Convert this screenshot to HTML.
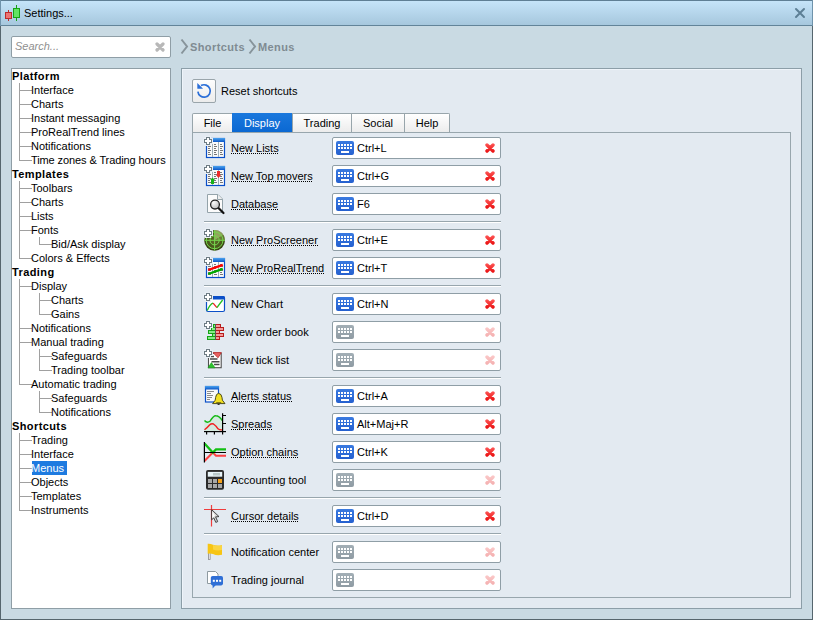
<!DOCTYPE html><html><head><meta charset="utf-8"><style>
*{box-sizing:border-box;margin:0;padding:0}
html,body{width:813px;height:620px;overflow:hidden}
body{position:relative;background:#c9dae3;font-family:"Liberation Sans",sans-serif;font-size:11px;color:#000}
.ab{position:absolute}
.t{position:absolute;white-space:nowrap;line-height:14px;height:14px}
.b{font-weight:bold;letter-spacing:0.4px}
.hl{position:absolute;background:#a0a0a0}
.lbl{position:absolute;white-space:nowrap;line-height:14px}
.u{background-image:linear-gradient(to right,#000 50%,transparent 50%);background-size:2px 1px;background-repeat:repeat-x;background-position:0 12px}
.fld{position:absolute;left:332px;width:169px;height:22px;background:#fff;border:1px solid #8f9ea6;border-radius:2px}
.kb{position:absolute;left:3px;top:3px;width:18px;height:14px}
.ft{position:absolute;left:24px;top:3px;line-height:14px;white-space:nowrap}
.x{position:absolute;left:152px;top:5px;width:10px;height:10px}
.sep{position:absolute;left:204px;width:297px;height:1px;background:#98a6ad;box-shadow:0 1px 0 #fff}
.tab{position:absolute;top:113px;height:19px;border:1px solid #98a5ab;border-bottom:none;background:linear-gradient(#fff,#ececec);text-align:center;line-height:14px;padding-top:2px}
</style></head><body>
<div class="ab" style="left:0;top:0;width:813px;height:620px;border:1px solid #56666e"></div>
<div class="ab" style="left:1px;top:1px;width:811px;height:24px;background:linear-gradient(#c5e4f9,#a6c7dd)"></div>
<div class="ab" style="left:0;top:0;width:813px;height:1px;background:#5f7f95"></div>
<div class="ab" style="left:0;top:25px;width:813px;height:1px;background:#628499"></div>
<div class="ab" style="left:812px;top:0;width:1px;height:26px;background:#6f93ab"></div>
<div class="ab" style="left:0;top:0;width:1px;height:26px;background:#6f93ab"></div>
<svg class="ab" style="left:0;top:0" width="24" height="24" shape-rendering="crispEdges">
<rect x="8" y="10" width="1" height="11" fill="#bd2b2b"/>
<rect x="5.5" y="12.5" width="6" height="6" fill="#ec7474" stroke="#bd2b2b" stroke-width="1"/>
<rect x="16" y="5" width="1" height="16" fill="#17a317"/>
<rect x="13.5" y="8.5" width="6" height="9" fill="#62e462" stroke="#17a317" stroke-width="1"/>
</svg>
<div class="t" style="left:24px;top:6px">Settings...</div>
<svg class="ab" style="left:792px;top:5px" width="16" height="16"><path d="M4 4 L12 12 M12 4 L4 12" stroke="#5d7f95" stroke-width="2" stroke-linecap="round"/></svg>
<div class="ab" style="left:11px;top:36px;width:160px;height:22px;background:#fff;border:1px solid #8f9ea6;border-radius:2px"></div>
<div class="t" style="left:15px;top:39px;font-style:italic;color:#8f8f8f">Search...</div>
<svg class="ab" style="left:155px;top:42px" width="10" height="10"><path d="M2 2 L8 8 M8 2 L2 8" stroke="#b8b8b8" stroke-width="3.2" stroke-linecap="round"/></svg>
<div class="ab" style="left:11px;top:68px;width:160px;height:541px;background:#fff;border:1px solid #8f9ea6"></div>
<div class="t b" style="left:12px;top:69px">Platform</div>
<div class="hl" style="left:20px;top:90px;width:12px;height:1px"></div>
<div class="t" style="left:31px;top:83px;">Interface</div>
<div class="hl" style="left:20px;top:104px;width:12px;height:1px"></div>
<div class="t" style="left:31px;top:97px;">Charts</div>
<div class="hl" style="left:20px;top:118px;width:12px;height:1px"></div>
<div class="t" style="left:31px;top:111px;">Instant messaging</div>
<div class="hl" style="left:20px;top:132px;width:12px;height:1px"></div>
<div class="t" style="left:31px;top:125px;">ProRealTrend lines</div>
<div class="hl" style="left:20px;top:146px;width:12px;height:1px"></div>
<div class="t" style="left:31px;top:139px;">Notifications</div>
<div class="hl" style="left:20px;top:160px;width:12px;height:1px"></div>
<div class="t" style="left:31px;top:153px;letter-spacing:-0.1px;">Time zones &amp; Trading hours</div>
<div class="t b" style="left:12px;top:167px">Templates</div>
<div class="hl" style="left:20px;top:188px;width:12px;height:1px"></div>
<div class="t" style="left:31px;top:181px;">Toolbars</div>
<div class="hl" style="left:20px;top:202px;width:12px;height:1px"></div>
<div class="t" style="left:31px;top:195px;">Charts</div>
<div class="hl" style="left:20px;top:216px;width:12px;height:1px"></div>
<div class="t" style="left:31px;top:209px;">Lists</div>
<div class="hl" style="left:20px;top:230px;width:12px;height:1px"></div>
<div class="t" style="left:31px;top:223px;">Fonts</div>
<div class="hl" style="left:40px;top:244px;width:12px;height:1px"></div>
<div class="t" style="left:51px;top:237px;">Bid/Ask display</div>
<div class="hl" style="left:20px;top:258px;width:12px;height:1px"></div>
<div class="t" style="left:31px;top:251px;">Colors &amp; Effects</div>
<div class="t b" style="left:12px;top:265px">Trading</div>
<div class="hl" style="left:20px;top:286px;width:12px;height:1px"></div>
<div class="t" style="left:31px;top:279px;">Display</div>
<div class="hl" style="left:40px;top:300px;width:12px;height:1px"></div>
<div class="t" style="left:51px;top:293px;">Charts</div>
<div class="hl" style="left:40px;top:314px;width:12px;height:1px"></div>
<div class="t" style="left:51px;top:307px;">Gains</div>
<div class="hl" style="left:20px;top:328px;width:12px;height:1px"></div>
<div class="t" style="left:31px;top:321px;">Notifications</div>
<div class="hl" style="left:20px;top:342px;width:12px;height:1px"></div>
<div class="t" style="left:31px;top:335px;">Manual trading</div>
<div class="hl" style="left:40px;top:356px;width:12px;height:1px"></div>
<div class="t" style="left:51px;top:349px;">Safeguards</div>
<div class="hl" style="left:40px;top:370px;width:12px;height:1px"></div>
<div class="t" style="left:51px;top:363px;">Trading toolbar</div>
<div class="hl" style="left:20px;top:384px;width:12px;height:1px"></div>
<div class="t" style="left:31px;top:377px;">Automatic trading</div>
<div class="hl" style="left:40px;top:398px;width:12px;height:1px"></div>
<div class="t" style="left:51px;top:391px;">Safeguards</div>
<div class="hl" style="left:40px;top:412px;width:12px;height:1px"></div>
<div class="t" style="left:51px;top:405px;">Notifications</div>
<div class="t b" style="left:12px;top:419px">Shortcuts</div>
<div class="hl" style="left:20px;top:440px;width:12px;height:1px"></div>
<div class="t" style="left:31px;top:433px;">Trading</div>
<div class="hl" style="left:20px;top:454px;width:12px;height:1px"></div>
<div class="t" style="left:31px;top:447px;">Interface</div>
<div class="hl" style="left:20px;top:468px;width:12px;height:1px"></div>
<div class="ab" style="left:32px;top:461px;width:35px;height:14px;background:#1e7be0"></div>
<div class="t" style="left:31px;top:461px;color:#fff">Menus</div>
<div class="hl" style="left:20px;top:482px;width:12px;height:1px"></div>
<div class="t" style="left:31px;top:475px;">Objects</div>
<div class="hl" style="left:20px;top:496px;width:12px;height:1px"></div>
<div class="t" style="left:31px;top:489px;">Templates</div>
<div class="hl" style="left:20px;top:510px;width:12px;height:1px"></div>
<div class="t" style="left:31px;top:503px;">Instruments</div>
<div class="hl" style="left:19px;top:83px;width:1px;height:78px"></div>
<div class="hl" style="left:19px;top:181px;width:1px;height:78px"></div>
<div class="hl" style="left:39px;top:237px;width:1px;height:8px"></div>
<div class="hl" style="left:19px;top:279px;width:1px;height:106px"></div>
<div class="hl" style="left:39px;top:293px;width:1px;height:22px"></div>
<div class="hl" style="left:39px;top:349px;width:1px;height:22px"></div>
<div class="hl" style="left:39px;top:391px;width:1px;height:22px"></div>
<div class="hl" style="left:19px;top:433px;width:1px;height:78px"></div>
<svg class="ab" style="left:180px;top:38px" width="10" height="18"><path d="M1.5 1.5 L7 8.5 L1.5 15.5" fill="none" stroke="#87949b" stroke-width="2"/></svg>
<div class="t b" style="left:190px;top:40px;color:#7f8b92">Shortcuts</div>
<svg class="ab" style="left:248px;top:38px" width="10" height="18"><path d="M1.5 1.5 L7 8.5 L1.5 15.5" fill="none" stroke="#87949b" stroke-width="2"/></svg>
<div class="t b" style="left:258px;top:40px;color:#7f8b92">Menus</div>
<div class="ab" style="left:181px;top:68px;width:621px;height:541px;background:#e3eaf1;border:1px solid #8c9ea8;box-shadow:inset 1px 1px 0 #eef4fa"></div>
<div class="ab" style="left:192px;top:79px;width:24px;height:24px;border:1px solid #9aa5ab;border-radius:2px;background:linear-gradient(#fdfdfd,#ececec)"></div>
<svg class="ab" style="left:192px;top:79px" width="24" height="24">
<path d="M5.9 12.6 A6.2 6.2 0 1 0 9.0 6.6" fill="none" stroke="#2b6fd8" stroke-width="1.7"/>
<path d="M5.3 4 L5.3 9.8 L11.1 9.8 Z" fill="#2b6fd8"/>
</svg>
<div class="t" style="left:221px;top:84px">Reset shortcuts</div>
<div class="ab" style="left:192px;top:132px;width:599px;height:466px;border:1px solid #98a6ad;background:#e3eaf1"></div>
<div class="tab" style="left:192px;width:41px;border-top-left-radius:2px;">File</div>
<div class="tab" style="left:292px;width:60px;">Trading</div>
<div class="tab" style="left:351px;width:54px;">Social</div>
<div class="tab" style="left:404px;width:46px;border-top-right-radius:2px;">Help</div>
<div class="tab" style="left:232px;width:60px;border:none;background:linear-gradient(#1a78dd,#0b68d2);color:#fff;height:19px;padding-top:3px">Display</div>
<div class="ab" style="left:204px;top:137px;width:22px;height:22px"><svg width="22" height="22" viewBox="0 0 22 22" style="position:absolute;left:0;top:0;overflow:visible"><defs><linearGradient id="hdr" x1="0" y1="0" x2="0" y2="1"><stop offset="0" stop-color="#4aa3ee"/><stop offset="1" stop-color="#0b56c9"/></linearGradient></defs><rect x="2.5" y="1.5" width="18" height="19" fill="#fafafa" stroke="#0a4fc9" stroke-width="1.2"/><rect x="2" y="1" width="19" height="4" fill="url(#hdr)"/><rect x="8" y="5" width="1" height="15" fill="#9fb0b8"/><rect x="14" y="5" width="1" height="15" fill="#9fb0b8"/><rect x="4" y="7" width="2" height="1" fill="#777"/><rect x="4" y="9" width="3" height="1" fill="#777"/><rect x="4" y="11" width="2" height="1" fill="#777"/><rect x="4" y="13" width="3" height="1" fill="#777"/><rect x="4" y="15" width="2" height="1" fill="#777"/><rect x="4" y="17" width="3" height="1" fill="#777"/><rect x="10" y="7" width="2" height="1" fill="#777"/><rect x="10" y="9" width="3" height="1" fill="#777"/><rect x="10" y="11" width="2" height="1" fill="#777"/><rect x="10" y="13" width="3" height="1" fill="#777"/><rect x="10" y="15" width="2" height="1" fill="#777"/><rect x="10" y="17" width="3" height="1" fill="#777"/><rect x="16" y="7" width="2" height="1" fill="#777"/><rect x="16" y="9" width="3" height="1" fill="#777"/><rect x="16" y="11" width="2" height="1" fill="#777"/><rect x="16" y="13" width="3" height="1" fill="#777"/><rect x="16" y="15" width="2" height="1" fill="#777"/><rect x="16" y="17" width="3" height="1" fill="#777"/><g shape-rendering="crispEdges"><path d="M1 -1 H7 V1 H9 V7 H7 V9 H1 V7 H-1 V1 H1 Z" fill="#e9eff5"/><path d="M2 0 H6 V2 H8 V6 H6 V8 H2 V6 H0 V2 H2 Z" fill="#6e7c84"/><path d="M3 1 H5 V3 H7 V5 H5 V7 H3 V5 H1 V3 H3 Z" fill="#fff"/></g></svg></div>
<div class="lbl u" style="left:231px;top:141px">New Lists</div>
<div class="fld" style="top:137px"><svg class="kb" width="18" height="14" shape-rendering="crispEdges"><defs><linearGradient id="g1" x1="0" y1="0" x2="0" y2="1"><stop offset="0" stop-color="#3a7ae0"/><stop offset="1" stop-color="#2560cf"/></linearGradient></defs><rect x="0" y="0" width="18" height="14" rx="2" fill="url(#g1)" shape-rendering="auto"/><rect x="2" y="3" width="2" height="2" fill="#fff"/><rect x="2" y="6" width="2" height="2" fill="#fff"/><rect x="5" y="3" width="2" height="2" fill="#fff"/><rect x="5" y="6" width="2" height="2" fill="#fff"/><rect x="8" y="3" width="2" height="2" fill="#fff"/><rect x="8" y="6" width="2" height="2" fill="#fff"/><rect x="11" y="3" width="2" height="2" fill="#fff"/><rect x="11" y="6" width="2" height="2" fill="#fff"/><rect x="14" y="3" width="2" height="2" fill="#fff"/><rect x="14" y="6" width="2" height="2" fill="#fff"/><rect x="5" y="10" width="8" height="2" fill="#fff"/></svg><div class="ft">Ctrl+L</div><svg class="x" width="10" height="10"><defs><linearGradient id="xg1" gradientUnits="userSpaceOnUse" x1="0" y1="0" x2="0" y2="10"><stop offset="0" stop-color="#ff5a5a"/><stop offset="1" stop-color="#e80a0a"/></linearGradient></defs><path d="M2 2 L8 8 M8 2 L2 8" stroke="url(#xg1)" stroke-width="3.4" stroke-linecap="round"/></svg></div>
<div class="ab" style="left:204px;top:165px;width:22px;height:22px"><svg width="22" height="22" viewBox="0 0 22 22" style="position:absolute;left:0;top:0;overflow:visible"><defs><linearGradient id="hdr" x1="0" y1="0" x2="0" y2="1"><stop offset="0" stop-color="#4aa3ee"/><stop offset="1" stop-color="#0b56c9"/></linearGradient></defs><rect x="2.5" y="1.5" width="18" height="19" fill="#fafafa" stroke="#0a4fc9" stroke-width="1.2"/><rect x="2" y="1" width="19" height="4" fill="url(#hdr)"/><rect x="8" y="5" width="1" height="15" fill="#9fb0b8"/><rect x="14" y="5" width="1" height="15" fill="#9fb0b8"/><rect x="4" y="7" width="2" height="1" fill="#777"/><rect x="4" y="9" width="3" height="1" fill="#777"/><rect x="4" y="11" width="2" height="1" fill="#777"/><rect x="4" y="13" width="3" height="1" fill="#777"/><rect x="4" y="15" width="2" height="1" fill="#777"/><rect x="4" y="17" width="3" height="1" fill="#777"/><rect x="10" y="7" width="2" height="1" fill="#777"/><rect x="10" y="9" width="3" height="1" fill="#777"/><rect x="10" y="11" width="2" height="1" fill="#777"/><rect x="10" y="13" width="3" height="1" fill="#777"/><rect x="10" y="15" width="2" height="1" fill="#777"/><rect x="10" y="17" width="3" height="1" fill="#777"/><rect x="16" y="7" width="2" height="1" fill="#777"/><rect x="16" y="9" width="3" height="1" fill="#777"/><rect x="16" y="11" width="2" height="1" fill="#777"/><rect x="16" y="13" width="3" height="1" fill="#777"/><rect x="16" y="15" width="2" height="1" fill="#777"/><rect x="16" y="17" width="3" height="1" fill="#777"/><path d="M8.5 12.5 L11 15 L10 15 L10 19 L7 19 L7 15 L6 15 Z" fill="#19b219"/><path d="M14.5 13 L17 10 L16 10 L16 6 L13 6 L13 10 L12 10 Z" fill="#ee2a2a"/><g shape-rendering="crispEdges"><path d="M1 -1 H7 V1 H9 V7 H7 V9 H1 V7 H-1 V1 H1 Z" fill="#e9eff5"/><path d="M2 0 H6 V2 H8 V6 H6 V8 H2 V6 H0 V2 H2 Z" fill="#6e7c84"/><path d="M3 1 H5 V3 H7 V5 H5 V7 H3 V5 H1 V3 H3 Z" fill="#fff"/></g></svg></div>
<div class="lbl u" style="left:231px;top:169px">New Top movers</div>
<div class="fld" style="top:165px"><svg class="kb" width="18" height="14" shape-rendering="crispEdges"><defs><linearGradient id="g1" x1="0" y1="0" x2="0" y2="1"><stop offset="0" stop-color="#3a7ae0"/><stop offset="1" stop-color="#2560cf"/></linearGradient></defs><rect x="0" y="0" width="18" height="14" rx="2" fill="url(#g1)" shape-rendering="auto"/><rect x="2" y="3" width="2" height="2" fill="#fff"/><rect x="2" y="6" width="2" height="2" fill="#fff"/><rect x="5" y="3" width="2" height="2" fill="#fff"/><rect x="5" y="6" width="2" height="2" fill="#fff"/><rect x="8" y="3" width="2" height="2" fill="#fff"/><rect x="8" y="6" width="2" height="2" fill="#fff"/><rect x="11" y="3" width="2" height="2" fill="#fff"/><rect x="11" y="6" width="2" height="2" fill="#fff"/><rect x="14" y="3" width="2" height="2" fill="#fff"/><rect x="14" y="6" width="2" height="2" fill="#fff"/><rect x="5" y="10" width="8" height="2" fill="#fff"/></svg><div class="ft">Ctrl+G</div><svg class="x" width="10" height="10"><defs><linearGradient id="xg1" gradientUnits="userSpaceOnUse" x1="0" y1="0" x2="0" y2="10"><stop offset="0" stop-color="#ff5a5a"/><stop offset="1" stop-color="#e80a0a"/></linearGradient></defs><path d="M2 2 L8 8 M8 2 L2 8" stroke="url(#xg1)" stroke-width="3.4" stroke-linecap="round"/></svg></div>
<div class="ab" style="left:204px;top:193px;width:22px;height:22px"><svg width="22" height="22" viewBox="0 0 22 22" style="position:absolute;left:0;top:0;overflow:visible"><defs><linearGradient id="hdr" x1="0" y1="0" x2="0" y2="1"><stop offset="0" stop-color="#4aa3ee"/><stop offset="1" stop-color="#0b56c9"/></linearGradient></defs><path d="M3.5 1.5 H14 L18.5 6 V19.5 H3.5 Z" fill="#fbfbfb" stroke="#94a3aa" stroke-width="1"/><path d="M13.5 1.5 V6.5 H18.5" fill="#eee" stroke="#94a3aa" stroke-width="1"/><path d="M14 14.5 L19.5 20" stroke="#111" stroke-width="2.2" stroke-linecap="round"/><defs><radialGradient id="mg" cx="0.35" cy="0.3" r="0.8"><stop offset="0" stop-color="#fafafa"/><stop offset="1" stop-color="#b8b8b8"/></radialGradient></defs><circle cx="11" cy="11.6" r="4.4" fill="url(#mg)" stroke="#222" stroke-width="1.3"/></svg></div>
<div class="lbl u" style="left:231px;top:197px">Database</div>
<div class="fld" style="top:193px"><svg class="kb" width="18" height="14" shape-rendering="crispEdges"><defs><linearGradient id="g1" x1="0" y1="0" x2="0" y2="1"><stop offset="0" stop-color="#3a7ae0"/><stop offset="1" stop-color="#2560cf"/></linearGradient></defs><rect x="0" y="0" width="18" height="14" rx="2" fill="url(#g1)" shape-rendering="auto"/><rect x="2" y="3" width="2" height="2" fill="#fff"/><rect x="2" y="6" width="2" height="2" fill="#fff"/><rect x="5" y="3" width="2" height="2" fill="#fff"/><rect x="5" y="6" width="2" height="2" fill="#fff"/><rect x="8" y="3" width="2" height="2" fill="#fff"/><rect x="8" y="6" width="2" height="2" fill="#fff"/><rect x="11" y="3" width="2" height="2" fill="#fff"/><rect x="11" y="6" width="2" height="2" fill="#fff"/><rect x="14" y="3" width="2" height="2" fill="#fff"/><rect x="14" y="6" width="2" height="2" fill="#fff"/><rect x="5" y="10" width="8" height="2" fill="#fff"/></svg><div class="ft">F6</div><svg class="x" width="10" height="10"><defs><linearGradient id="xg1" gradientUnits="userSpaceOnUse" x1="0" y1="0" x2="0" y2="10"><stop offset="0" stop-color="#ff5a5a"/><stop offset="1" stop-color="#e80a0a"/></linearGradient></defs><path d="M2 2 L8 8 M8 2 L2 8" stroke="url(#xg1)" stroke-width="3.4" stroke-linecap="round"/></svg></div>
<div class="sep" style="top:221px"></div>
<div class="ab" style="left:204px;top:229px;width:22px;height:22px"><svg width="22" height="22" viewBox="0 0 22 22" style="position:absolute;left:0;top:0;overflow:visible"><defs><linearGradient id="hdr" x1="0" y1="0" x2="0" y2="1"><stop offset="0" stop-color="#4aa3ee"/><stop offset="1" stop-color="#0b56c9"/></linearGradient></defs><defs><radialGradient id="rad" cx="0.5" cy="0.5" r="0.5"><stop offset="0" stop-color="#5a6a28"/><stop offset="0.8" stop-color="#46561a"/><stop offset="1" stop-color="#2e3a0e"/></radialGradient></defs><circle cx="10.6" cy="11.3" r="10.4" fill="url(#rad)"/><path d="M10.6 11.3 L10.6 0.9 A10.4 10.4 0 0 1 19.6 6.1 Z" fill="#a8c070" opacity="0.75"/><path d="M10.6 11.3 L19.6 6.1 A10.4 10.4 0 0 1 21 11.3 Z" fill="#7f9848" opacity="0.6"/><g stroke="#76d64e" stroke-width="1" fill="none"><path d="M0.3 11.3 H21 M10.6 1 V21.7"/><circle cx="10.6" cy="11.3" r="4.6"/><circle cx="10.6" cy="11.3" r="8.4"/></g><g shape-rendering="crispEdges"><path d="M1 -1 H7 V1 H9 V7 H7 V9 H1 V7 H-1 V1 H1 Z" fill="#e9eff5"/><path d="M2 0 H6 V2 H8 V6 H6 V8 H2 V6 H0 V2 H2 Z" fill="#6e7c84"/><path d="M3 1 H5 V3 H7 V5 H5 V7 H3 V5 H1 V3 H3 Z" fill="#fff"/></g></svg></div>
<div class="lbl u" style="left:231px;top:233px">New ProScreener</div>
<div class="fld" style="top:229px"><svg class="kb" width="18" height="14" shape-rendering="crispEdges"><defs><linearGradient id="g1" x1="0" y1="0" x2="0" y2="1"><stop offset="0" stop-color="#3a7ae0"/><stop offset="1" stop-color="#2560cf"/></linearGradient></defs><rect x="0" y="0" width="18" height="14" rx="2" fill="url(#g1)" shape-rendering="auto"/><rect x="2" y="3" width="2" height="2" fill="#fff"/><rect x="2" y="6" width="2" height="2" fill="#fff"/><rect x="5" y="3" width="2" height="2" fill="#fff"/><rect x="5" y="6" width="2" height="2" fill="#fff"/><rect x="8" y="3" width="2" height="2" fill="#fff"/><rect x="8" y="6" width="2" height="2" fill="#fff"/><rect x="11" y="3" width="2" height="2" fill="#fff"/><rect x="11" y="6" width="2" height="2" fill="#fff"/><rect x="14" y="3" width="2" height="2" fill="#fff"/><rect x="14" y="6" width="2" height="2" fill="#fff"/><rect x="5" y="10" width="8" height="2" fill="#fff"/></svg><div class="ft">Ctrl+E</div><svg class="x" width="10" height="10"><defs><linearGradient id="xg1" gradientUnits="userSpaceOnUse" x1="0" y1="0" x2="0" y2="10"><stop offset="0" stop-color="#ff5a5a"/><stop offset="1" stop-color="#e80a0a"/></linearGradient></defs><path d="M2 2 L8 8 M8 2 L2 8" stroke="url(#xg1)" stroke-width="3.4" stroke-linecap="round"/></svg></div>
<div class="ab" style="left:204px;top:257px;width:22px;height:22px"><svg width="22" height="22" viewBox="0 0 22 22" style="position:absolute;left:0;top:0;overflow:visible"><defs><linearGradient id="hdr" x1="0" y1="0" x2="0" y2="1"><stop offset="0" stop-color="#4aa3ee"/><stop offset="1" stop-color="#0b56c9"/></linearGradient></defs><rect x="2.5" y="1.5" width="18" height="19" fill="#fafafa" stroke="#0a4fc9" stroke-width="1.2"/><rect x="2" y="1" width="19" height="4" fill="url(#hdr)"/><rect x="8" y="5" width="1" height="15" fill="#9fb0b8"/><rect x="14" y="5" width="1" height="15" fill="#9fb0b8"/><rect x="4" y="7" width="2" height="1" fill="#777"/><rect x="4" y="9" width="3" height="1" fill="#777"/><rect x="4" y="11" width="2" height="1" fill="#777"/><rect x="4" y="13" width="3" height="1" fill="#777"/><rect x="4" y="15" width="2" height="1" fill="#777"/><rect x="4" y="17" width="3" height="1" fill="#777"/><rect x="10" y="7" width="2" height="1" fill="#777"/><rect x="10" y="9" width="3" height="1" fill="#777"/><rect x="10" y="11" width="2" height="1" fill="#777"/><rect x="10" y="13" width="3" height="1" fill="#777"/><rect x="10" y="15" width="2" height="1" fill="#777"/><rect x="10" y="17" width="3" height="1" fill="#777"/><rect x="16" y="7" width="2" height="1" fill="#777"/><rect x="16" y="9" width="3" height="1" fill="#777"/><rect x="16" y="11" width="2" height="1" fill="#777"/><rect x="16" y="13" width="3" height="1" fill="#777"/><rect x="16" y="15" width="2" height="1" fill="#777"/><rect x="16" y="17" width="3" height="1" fill="#777"/><path d="M4.2 13 L18.8 7.8" stroke="#f00" stroke-width="2.3"/><path d="M4.2 17 L18.8 11.9" stroke="#0a0" stroke-width="2.3"/><g shape-rendering="crispEdges"><path d="M1 -1 H7 V1 H9 V7 H7 V9 H1 V7 H-1 V1 H1 Z" fill="#e9eff5"/><path d="M2 0 H6 V2 H8 V6 H6 V8 H2 V6 H0 V2 H2 Z" fill="#6e7c84"/><path d="M3 1 H5 V3 H7 V5 H5 V7 H3 V5 H1 V3 H3 Z" fill="#fff"/></g></svg></div>
<div class="lbl u" style="left:231px;top:261px">New ProRealTrend</div>
<div class="fld" style="top:257px"><svg class="kb" width="18" height="14" shape-rendering="crispEdges"><defs><linearGradient id="g1" x1="0" y1="0" x2="0" y2="1"><stop offset="0" stop-color="#3a7ae0"/><stop offset="1" stop-color="#2560cf"/></linearGradient></defs><rect x="0" y="0" width="18" height="14" rx="2" fill="url(#g1)" shape-rendering="auto"/><rect x="2" y="3" width="2" height="2" fill="#fff"/><rect x="2" y="6" width="2" height="2" fill="#fff"/><rect x="5" y="3" width="2" height="2" fill="#fff"/><rect x="5" y="6" width="2" height="2" fill="#fff"/><rect x="8" y="3" width="2" height="2" fill="#fff"/><rect x="8" y="6" width="2" height="2" fill="#fff"/><rect x="11" y="3" width="2" height="2" fill="#fff"/><rect x="11" y="6" width="2" height="2" fill="#fff"/><rect x="14" y="3" width="2" height="2" fill="#fff"/><rect x="14" y="6" width="2" height="2" fill="#fff"/><rect x="5" y="10" width="8" height="2" fill="#fff"/></svg><div class="ft">Ctrl+T</div><svg class="x" width="10" height="10"><defs><linearGradient id="xg1" gradientUnits="userSpaceOnUse" x1="0" y1="0" x2="0" y2="10"><stop offset="0" stop-color="#ff5a5a"/><stop offset="1" stop-color="#e80a0a"/></linearGradient></defs><path d="M2 2 L8 8 M8 2 L2 8" stroke="url(#xg1)" stroke-width="3.4" stroke-linecap="round"/></svg></div>
<div class="sep" style="top:285px"></div>
<div class="ab" style="left:204px;top:293px;width:22px;height:22px"><svg width="22" height="22" viewBox="0 0 22 22" style="position:absolute;left:0;top:0;overflow:visible"><defs><linearGradient id="hdr" x1="0" y1="0" x2="0" y2="1"><stop offset="0" stop-color="#4aa3ee"/><stop offset="1" stop-color="#0b56c9"/></linearGradient></defs><rect x="2.5" y="3.5" width="18" height="15" rx="1.5" fill="#fff" stroke="#0b4fc8" stroke-width="1.2"/><path d="M2 3 H19 Q21 3 21 5 V6.5 H2 Z" fill="#0b4fc8"/><path d="M3.2 17.6 Q6 11 9.1 10.1" fill="none" stroke="#22c022" stroke-width="1.3"/><path d="M9.1 10.1 L12.9 14.6" fill="none" stroke="#f02020" stroke-width="1.3"/><path d="M12.9 14.6 L18.6 7" fill="none" stroke="#22c022" stroke-width="1.3"/><g shape-rendering="crispEdges"><path d="M1 -1 H7 V1 H9 V7 H7 V9 H1 V7 H-1 V1 H1 Z" fill="#e9eff5"/><path d="M2 0 H6 V2 H8 V6 H6 V8 H2 V6 H0 V2 H2 Z" fill="#6e7c84"/><path d="M3 1 H5 V3 H7 V5 H5 V7 H3 V5 H1 V3 H3 Z" fill="#fff"/></g></svg></div>
<div class="lbl" style="left:231px;top:297px">New Chart</div>
<div class="fld" style="top:293px"><svg class="kb" width="18" height="14" shape-rendering="crispEdges"><defs><linearGradient id="g1" x1="0" y1="0" x2="0" y2="1"><stop offset="0" stop-color="#3a7ae0"/><stop offset="1" stop-color="#2560cf"/></linearGradient></defs><rect x="0" y="0" width="18" height="14" rx="2" fill="url(#g1)" shape-rendering="auto"/><rect x="2" y="3" width="2" height="2" fill="#fff"/><rect x="2" y="6" width="2" height="2" fill="#fff"/><rect x="5" y="3" width="2" height="2" fill="#fff"/><rect x="5" y="6" width="2" height="2" fill="#fff"/><rect x="8" y="3" width="2" height="2" fill="#fff"/><rect x="8" y="6" width="2" height="2" fill="#fff"/><rect x="11" y="3" width="2" height="2" fill="#fff"/><rect x="11" y="6" width="2" height="2" fill="#fff"/><rect x="14" y="3" width="2" height="2" fill="#fff"/><rect x="14" y="6" width="2" height="2" fill="#fff"/><rect x="5" y="10" width="8" height="2" fill="#fff"/></svg><div class="ft">Ctrl+N</div><svg class="x" width="10" height="10"><defs><linearGradient id="xg1" gradientUnits="userSpaceOnUse" x1="0" y1="0" x2="0" y2="10"><stop offset="0" stop-color="#ff5a5a"/><stop offset="1" stop-color="#e80a0a"/></linearGradient></defs><path d="M2 2 L8 8 M8 2 L2 8" stroke="url(#xg1)" stroke-width="3.4" stroke-linecap="round"/></svg></div>
<div class="ab" style="left:204px;top:321px;width:22px;height:22px"><svg width="22" height="22" viewBox="0 0 22 22" style="position:absolute;left:0;top:0;overflow:visible"><defs><linearGradient id="hdr" x1="0" y1="0" x2="0" y2="1"><stop offset="0" stop-color="#4aa3ee"/><stop offset="1" stop-color="#0b56c9"/></linearGradient></defs><g shape-rendering="crispEdges"><rect x="9" y="3" width="2" height="4" fill="#16a316"/><rect x="10" y="4" width="1" height="2" fill="#86ec86"/><rect x="12" y="3" width="5" height="4" fill="#b81c1c"/><rect x="12" y="4" width="4" height="2" fill="#f49a9a"/><rect x="7" y="6" width="4" height="4" fill="#16a316"/><rect x="8" y="7" width="3" height="2" fill="#86ec86"/><rect x="12" y="6" width="8" height="4" fill="#b81c1c"/><rect x="12" y="7" width="7" height="2" fill="#f49a9a"/><rect x="4" y="9" width="7" height="4" fill="#16a316"/><rect x="5" y="10" width="6" height="2" fill="#86ec86"/><rect x="12" y="9" width="4" height="4" fill="#b81c1c"/><rect x="12" y="10" width="3" height="2" fill="#f49a9a"/><rect x="8" y="12" width="3" height="4" fill="#16a316"/><rect x="9" y="13" width="2" height="2" fill="#86ec86"/><rect x="12" y="12" width="8" height="4" fill="#b81c1c"/><rect x="12" y="13" width="7" height="2" fill="#f49a9a"/><rect x="3" y="15" width="8" height="4" fill="#16a316"/><rect x="4" y="16" width="7" height="2" fill="#86ec86"/><rect x="12" y="15" width="4" height="4" fill="#b81c1c"/><rect x="12" y="16" width="3" height="2" fill="#f49a9a"/><rect x="11" y="3" width="1" height="16" fill="#555"/></g><g shape-rendering="crispEdges"><path d="M1 -1 H7 V1 H9 V7 H7 V9 H1 V7 H-1 V1 H1 Z" fill="#e9eff5"/><path d="M2 0 H6 V2 H8 V6 H6 V8 H2 V6 H0 V2 H2 Z" fill="#6e7c84"/><path d="M3 1 H5 V3 H7 V5 H5 V7 H3 V5 H1 V3 H3 Z" fill="#fff"/></g></svg></div>
<div class="lbl" style="left:231px;top:325px">New order book</div>
<div class="fld" style="top:321px"><svg class="kb" width="18" height="14" shape-rendering="crispEdges"><defs><linearGradient id="g0" x1="0" y1="0" x2="0" y2="1"><stop offset="0" stop-color="#a3afb6"/><stop offset="1" stop-color="#8f9ba3"/></linearGradient></defs><rect x="0" y="0" width="18" height="14" rx="2" fill="url(#g0)" shape-rendering="auto"/><rect x="2" y="3" width="2" height="2" fill="#fff"/><rect x="2" y="6" width="2" height="2" fill="#fff"/><rect x="5" y="3" width="2" height="2" fill="#fff"/><rect x="5" y="6" width="2" height="2" fill="#fff"/><rect x="8" y="3" width="2" height="2" fill="#fff"/><rect x="8" y="6" width="2" height="2" fill="#fff"/><rect x="11" y="3" width="2" height="2" fill="#fff"/><rect x="11" y="6" width="2" height="2" fill="#fff"/><rect x="14" y="3" width="2" height="2" fill="#fff"/><rect x="14" y="6" width="2" height="2" fill="#fff"/><rect x="5" y="10" width="8" height="2" fill="#fff"/></svg><div class="ft"></div><svg class="x" width="10" height="10"><defs><linearGradient id="xg0" gradientUnits="userSpaceOnUse" x1="0" y1="0" x2="0" y2="10"><stop offset="0" stop-color="#fbcaca"/><stop offset="1" stop-color="#f4aeae"/></linearGradient></defs><path d="M2 2 L8 8 M8 2 L2 8" stroke="url(#xg0)" stroke-width="3.4" stroke-linecap="round"/></svg></div>
<div class="ab" style="left:204px;top:349px;width:22px;height:22px"><svg width="22" height="22" viewBox="0 0 22 22" style="position:absolute;left:0;top:0;overflow:visible"><defs><linearGradient id="hdr" x1="0" y1="0" x2="0" y2="1"><stop offset="0" stop-color="#4aa3ee"/><stop offset="1" stop-color="#0b56c9"/></linearGradient></defs><rect x="4.5" y="4.3" width="12.7" height="14.4" fill="#fff" stroke="#505050" stroke-width="1.1"/><g stroke="#4a4a4a" stroke-width="1.5"><path d="M6 7.4 H10 M6 10.1 H13.5 M7.5 12.8 H15.5 M10 15.5 H15.5"/></g><path d="M9 3.6 H17.4 L14 8.8 Z" fill="#e86464" stroke="#b51818" stroke-width="0.7"/><path d="M4 18.8 H11 L7.4 13.6 Z" fill="#2ec22e" stroke="#14a014" stroke-width="0.6"/><g shape-rendering="crispEdges"><path d="M1 -1 H7 V1 H9 V7 H7 V9 H1 V7 H-1 V1 H1 Z" fill="#e9eff5"/><path d="M2 0 H6 V2 H8 V6 H6 V8 H2 V6 H0 V2 H2 Z" fill="#6e7c84"/><path d="M3 1 H5 V3 H7 V5 H5 V7 H3 V5 H1 V3 H3 Z" fill="#fff"/></g></svg></div>
<div class="lbl" style="left:231px;top:353px">New tick list</div>
<div class="fld" style="top:349px"><svg class="kb" width="18" height="14" shape-rendering="crispEdges"><defs><linearGradient id="g0" x1="0" y1="0" x2="0" y2="1"><stop offset="0" stop-color="#a3afb6"/><stop offset="1" stop-color="#8f9ba3"/></linearGradient></defs><rect x="0" y="0" width="18" height="14" rx="2" fill="url(#g0)" shape-rendering="auto"/><rect x="2" y="3" width="2" height="2" fill="#fff"/><rect x="2" y="6" width="2" height="2" fill="#fff"/><rect x="5" y="3" width="2" height="2" fill="#fff"/><rect x="5" y="6" width="2" height="2" fill="#fff"/><rect x="8" y="3" width="2" height="2" fill="#fff"/><rect x="8" y="6" width="2" height="2" fill="#fff"/><rect x="11" y="3" width="2" height="2" fill="#fff"/><rect x="11" y="6" width="2" height="2" fill="#fff"/><rect x="14" y="3" width="2" height="2" fill="#fff"/><rect x="14" y="6" width="2" height="2" fill="#fff"/><rect x="5" y="10" width="8" height="2" fill="#fff"/></svg><div class="ft"></div><svg class="x" width="10" height="10"><defs><linearGradient id="xg0" gradientUnits="userSpaceOnUse" x1="0" y1="0" x2="0" y2="10"><stop offset="0" stop-color="#fbcaca"/><stop offset="1" stop-color="#f4aeae"/></linearGradient></defs><path d="M2 2 L8 8 M8 2 L2 8" stroke="url(#xg0)" stroke-width="3.4" stroke-linecap="round"/></svg></div>
<div class="sep" style="top:377px"></div>
<div class="ab" style="left:204px;top:385px;width:22px;height:22px"><svg width="22" height="22" viewBox="0 0 22 22" style="position:absolute;left:0;top:0;overflow:visible"><defs><linearGradient id="hdr" x1="0" y1="0" x2="0" y2="1"><stop offset="0" stop-color="#4aa3ee"/><stop offset="1" stop-color="#0b56c9"/></linearGradient></defs><rect x="1.5" y="1.5" width="13" height="15.5" fill="#fafafa" stroke="#0b4fc8" stroke-width="1.2"/><rect x="1" y="1" width="14" height="3.5" fill="url(#hdr)"/><g fill="#8a8a8a" shape-rendering="crispEdges"><rect x="3" y="6" width="7" height="1"/><rect x="3" y="8" width="4" height="1"/><rect x="3" y="10" width="6" height="1"/><rect x="3" y="12" width="5" height="1"/><rect x="3" y="14" width="3" height="1"/></g><path d="M14.6 8.3 Q17.6 8.8 18 12.5 L18.4 15.2 L21 18.6 H8.6 L11.2 15.2 L11.6 12.5 Q12 8.8 14.6 8.3 Z" fill="#f2e022" stroke="#3a3a10" stroke-width="0.9"/><rect x="12.2" y="17.2" width="5" height="0.8" fill="#6a6010"/><path d="M13.6 18.6 h2 v1.4 h-2 z" fill="#333"/></svg></div>
<div class="lbl u" style="left:231px;top:389px">Alerts status</div>
<div class="fld" style="top:385px"><svg class="kb" width="18" height="14" shape-rendering="crispEdges"><defs><linearGradient id="g1" x1="0" y1="0" x2="0" y2="1"><stop offset="0" stop-color="#3a7ae0"/><stop offset="1" stop-color="#2560cf"/></linearGradient></defs><rect x="0" y="0" width="18" height="14" rx="2" fill="url(#g1)" shape-rendering="auto"/><rect x="2" y="3" width="2" height="2" fill="#fff"/><rect x="2" y="6" width="2" height="2" fill="#fff"/><rect x="5" y="3" width="2" height="2" fill="#fff"/><rect x="5" y="6" width="2" height="2" fill="#fff"/><rect x="8" y="3" width="2" height="2" fill="#fff"/><rect x="8" y="6" width="2" height="2" fill="#fff"/><rect x="11" y="3" width="2" height="2" fill="#fff"/><rect x="11" y="6" width="2" height="2" fill="#fff"/><rect x="14" y="3" width="2" height="2" fill="#fff"/><rect x="14" y="6" width="2" height="2" fill="#fff"/><rect x="5" y="10" width="8" height="2" fill="#fff"/></svg><div class="ft">Ctrl+A</div><svg class="x" width="10" height="10"><defs><linearGradient id="xg1" gradientUnits="userSpaceOnUse" x1="0" y1="0" x2="0" y2="10"><stop offset="0" stop-color="#ff5a5a"/><stop offset="1" stop-color="#e80a0a"/></linearGradient></defs><path d="M2 2 L8 8 M8 2 L2 8" stroke="url(#xg1)" stroke-width="3.4" stroke-linecap="round"/></svg></div>
<div class="ab" style="left:204px;top:413px;width:22px;height:22px"><svg width="22" height="22" viewBox="0 0 22 22" style="position:absolute;left:0;top:0;overflow:visible"><defs><linearGradient id="hdr" x1="0" y1="0" x2="0" y2="1"><stop offset="0" stop-color="#4aa3ee"/><stop offset="1" stop-color="#0b56c9"/></linearGradient></defs><path d="M0.4 7.4 Q3 10.3 6 8.2 Q10 2 12 2.7 Q15.5 2.8 18.4 7.5 V18 H0.4 Z" fill="#c8ead0" opacity="0.55"/><path d="M0.4 16.8 Q3.5 14.5 5.5 11.8 Q7.5 10.2 9.5 11 Q12 13 14 15.8 Q15.5 17 18.4 16.8 V18 H0.4 Z" fill="#e3eaf1" opacity="0.0"/><path d="M0.5 7.5 Q3 10.4 6 8.2 Q9.5 2.5 11.8 2.7 Q15 2.7 18.3 7.5" fill="none" stroke="#13b913" stroke-width="1.4"/><path d="M0.5 16.8 Q3.5 14.5 5.5 12 Q7.5 10.2 9.5 11 Q12 12.7 14 15.8 Q15.5 17 18.3 16.8" fill="none" stroke="#f21e1e" stroke-width="1.4"/><g stroke="#000" stroke-width="1.2" fill="none"><path d="M18.6 0.3 V21.6"/><path d="M0 18.6 H22"/><path d="M18.6 2.5 H22 M18.6 10.5 H22"/><path d="M2.6 18.6 V21.6 M10.4 18.6 V21.6"/></g></svg></div>
<div class="lbl u" style="left:231px;top:417px">Spreads</div>
<div class="fld" style="top:413px"><svg class="kb" width="18" height="14" shape-rendering="crispEdges"><defs><linearGradient id="g1" x1="0" y1="0" x2="0" y2="1"><stop offset="0" stop-color="#3a7ae0"/><stop offset="1" stop-color="#2560cf"/></linearGradient></defs><rect x="0" y="0" width="18" height="14" rx="2" fill="url(#g1)" shape-rendering="auto"/><rect x="2" y="3" width="2" height="2" fill="#fff"/><rect x="2" y="6" width="2" height="2" fill="#fff"/><rect x="5" y="3" width="2" height="2" fill="#fff"/><rect x="5" y="6" width="2" height="2" fill="#fff"/><rect x="8" y="3" width="2" height="2" fill="#fff"/><rect x="8" y="6" width="2" height="2" fill="#fff"/><rect x="11" y="3" width="2" height="2" fill="#fff"/><rect x="11" y="6" width="2" height="2" fill="#fff"/><rect x="14" y="3" width="2" height="2" fill="#fff"/><rect x="14" y="6" width="2" height="2" fill="#fff"/><rect x="5" y="10" width="8" height="2" fill="#fff"/></svg><div class="ft">Alt+Maj+R</div><svg class="x" width="10" height="10"><defs><linearGradient id="xg1" gradientUnits="userSpaceOnUse" x1="0" y1="0" x2="0" y2="10"><stop offset="0" stop-color="#ff5a5a"/><stop offset="1" stop-color="#e80a0a"/></linearGradient></defs><path d="M2 2 L8 8 M8 2 L2 8" stroke="url(#xg1)" stroke-width="3.4" stroke-linecap="round"/></svg></div>
<div class="ab" style="left:204px;top:441px;width:22px;height:22px"><svg width="22" height="22" viewBox="0 0 22 22" style="position:absolute;left:0;top:0;overflow:visible"><defs><linearGradient id="hdr" x1="0" y1="0" x2="0" y2="1"><stop offset="0" stop-color="#4aa3ee"/><stop offset="1" stop-color="#0b56c9"/></linearGradient></defs><path d="M0.5 20 L8.8 11.5 L12 14.8 H22" fill="none" stroke="#ff3030" stroke-width="2" opacity="0.9"/><path d="M0.5 2.5 L8.8 11.5 L12 8.4 H22" fill="none" stroke="#13c013" stroke-width="2.3"/><path d="M0.4 1 V21.6" stroke="#000" stroke-width="1.2"/><path d="M0.4 11.5 H22" stroke="#000" stroke-width="1"/></svg></div>
<div class="lbl u" style="left:231px;top:445px">Option chains</div>
<div class="fld" style="top:441px"><svg class="kb" width="18" height="14" shape-rendering="crispEdges"><defs><linearGradient id="g1" x1="0" y1="0" x2="0" y2="1"><stop offset="0" stop-color="#3a7ae0"/><stop offset="1" stop-color="#2560cf"/></linearGradient></defs><rect x="0" y="0" width="18" height="14" rx="2" fill="url(#g1)" shape-rendering="auto"/><rect x="2" y="3" width="2" height="2" fill="#fff"/><rect x="2" y="6" width="2" height="2" fill="#fff"/><rect x="5" y="3" width="2" height="2" fill="#fff"/><rect x="5" y="6" width="2" height="2" fill="#fff"/><rect x="8" y="3" width="2" height="2" fill="#fff"/><rect x="8" y="6" width="2" height="2" fill="#fff"/><rect x="11" y="3" width="2" height="2" fill="#fff"/><rect x="11" y="6" width="2" height="2" fill="#fff"/><rect x="14" y="3" width="2" height="2" fill="#fff"/><rect x="14" y="6" width="2" height="2" fill="#fff"/><rect x="5" y="10" width="8" height="2" fill="#fff"/></svg><div class="ft">Ctrl+K</div><svg class="x" width="10" height="10"><defs><linearGradient id="xg1" gradientUnits="userSpaceOnUse" x1="0" y1="0" x2="0" y2="10"><stop offset="0" stop-color="#ff5a5a"/><stop offset="1" stop-color="#e80a0a"/></linearGradient></defs><path d="M2 2 L8 8 M8 2 L2 8" stroke="url(#xg1)" stroke-width="3.4" stroke-linecap="round"/></svg></div>
<div class="ab" style="left:204px;top:469px;width:22px;height:22px"><svg width="22" height="22" viewBox="0 0 22 22" style="position:absolute;left:0;top:0;overflow:visible"><defs><linearGradient id="hdr" x1="0" y1="0" x2="0" y2="1"><stop offset="0" stop-color="#4aa3ee"/><stop offset="1" stop-color="#0b56c9"/></linearGradient></defs><rect x="2" y="1" width="18" height="19.8" rx="2" fill="#2b2b2b"/><rect x="3.8" y="2.9" width="14.4" height="4.8" fill="#e8f4f8"/><rect x="9" y="4" width="7" height="2.5" fill="#9aa" opacity="0.6"/><g fill="#a8a8a8" shape-rendering="crispEdges"><rect x="4" y="10" width="4" height="4"/><rect x="9" y="10" width="4" height="4"/><rect x="4" y="15" width="4" height="4"/><rect x="9" y="15" width="4" height="4"/><rect x="14" y="15" width="4" height="4"/></g><rect x="14" y="10" width="4" height="4" fill="#f5a21a" shape-rendering="crispEdges"/></svg></div>
<div class="lbl" style="left:231px;top:473px">Accounting tool</div>
<div class="fld" style="top:469px"><svg class="kb" width="18" height="14" shape-rendering="crispEdges"><defs><linearGradient id="g0" x1="0" y1="0" x2="0" y2="1"><stop offset="0" stop-color="#a3afb6"/><stop offset="1" stop-color="#8f9ba3"/></linearGradient></defs><rect x="0" y="0" width="18" height="14" rx="2" fill="url(#g0)" shape-rendering="auto"/><rect x="2" y="3" width="2" height="2" fill="#fff"/><rect x="2" y="6" width="2" height="2" fill="#fff"/><rect x="5" y="3" width="2" height="2" fill="#fff"/><rect x="5" y="6" width="2" height="2" fill="#fff"/><rect x="8" y="3" width="2" height="2" fill="#fff"/><rect x="8" y="6" width="2" height="2" fill="#fff"/><rect x="11" y="3" width="2" height="2" fill="#fff"/><rect x="11" y="6" width="2" height="2" fill="#fff"/><rect x="14" y="3" width="2" height="2" fill="#fff"/><rect x="14" y="6" width="2" height="2" fill="#fff"/><rect x="5" y="10" width="8" height="2" fill="#fff"/></svg><div class="ft"></div><svg class="x" width="10" height="10"><defs><linearGradient id="xg0" gradientUnits="userSpaceOnUse" x1="0" y1="0" x2="0" y2="10"><stop offset="0" stop-color="#fbcaca"/><stop offset="1" stop-color="#f4aeae"/></linearGradient></defs><path d="M2 2 L8 8 M8 2 L2 8" stroke="url(#xg0)" stroke-width="3.4" stroke-linecap="round"/></svg></div>
<div class="sep" style="top:497px"></div>
<div class="ab" style="left:204px;top:505px;width:22px;height:22px"><svg width="22" height="22" viewBox="0 0 22 22" style="position:absolute;left:0;top:0;overflow:visible"><defs><linearGradient id="hdr" x1="0" y1="0" x2="0" y2="1"><stop offset="0" stop-color="#4aa3ee"/><stop offset="1" stop-color="#0b56c9"/></linearGradient></defs><path d="M7.5 0 V21.6 M0 4.5 H22" stroke="#f03c3c" stroke-width="1.2"/><path d="M7.6 4.6 L15 11.6 L11.6 11.9 L13.7 16.6 L11.8 17.4 L9.8 12.9 L7.6 14.8 Z" fill="#d8d8d8" stroke="#333" stroke-width="0.9"/><path d="M8.3 6.5 L8.3 13.2 L11 10.6 Z" fill="#fff"/></svg></div>
<div class="lbl u" style="left:231px;top:509px">Cursor details</div>
<div class="fld" style="top:505px"><svg class="kb" width="18" height="14" shape-rendering="crispEdges"><defs><linearGradient id="g1" x1="0" y1="0" x2="0" y2="1"><stop offset="0" stop-color="#3a7ae0"/><stop offset="1" stop-color="#2560cf"/></linearGradient></defs><rect x="0" y="0" width="18" height="14" rx="2" fill="url(#g1)" shape-rendering="auto"/><rect x="2" y="3" width="2" height="2" fill="#fff"/><rect x="2" y="6" width="2" height="2" fill="#fff"/><rect x="5" y="3" width="2" height="2" fill="#fff"/><rect x="5" y="6" width="2" height="2" fill="#fff"/><rect x="8" y="3" width="2" height="2" fill="#fff"/><rect x="8" y="6" width="2" height="2" fill="#fff"/><rect x="11" y="3" width="2" height="2" fill="#fff"/><rect x="11" y="6" width="2" height="2" fill="#fff"/><rect x="14" y="3" width="2" height="2" fill="#fff"/><rect x="14" y="6" width="2" height="2" fill="#fff"/><rect x="5" y="10" width="8" height="2" fill="#fff"/></svg><div class="ft">Ctrl+D</div><svg class="x" width="10" height="10"><defs><linearGradient id="xg1" gradientUnits="userSpaceOnUse" x1="0" y1="0" x2="0" y2="10"><stop offset="0" stop-color="#ff5a5a"/><stop offset="1" stop-color="#e80a0a"/></linearGradient></defs><path d="M2 2 L8 8 M8 2 L2 8" stroke="url(#xg1)" stroke-width="3.4" stroke-linecap="round"/></svg></div>
<div class="sep" style="top:533px"></div>
<div class="ab" style="left:204px;top:541px;width:22px;height:22px"><svg width="22" height="22" viewBox="0 0 22 22" style="position:absolute;left:0;top:0;overflow:visible"><defs><linearGradient id="hdr" x1="0" y1="0" x2="0" y2="1"><stop offset="0" stop-color="#4aa3ee"/><stop offset="1" stop-color="#0b56c9"/></linearGradient></defs><rect x="4.5" y="11.5" width="1.6" height="7" fill="#fff" stroke="#888" stroke-width="0.8"/><path d="M3.7 2.8 Q6 2.4 9 3.8 Q13 5.2 18 4 V13.8 Q13 15 9 13 Q6 12 3.7 12.8 Z" fill="#f7c514"/><path d="M9 4 Q13 5.4 18 4.2 V9 Q13 10 9 8.5 Z" fill="#fbe060" opacity="0.6"/></svg></div>
<div class="lbl" style="left:231px;top:545px">Notification center</div>
<div class="fld" style="top:541px"><svg class="kb" width="18" height="14" shape-rendering="crispEdges"><defs><linearGradient id="g0" x1="0" y1="0" x2="0" y2="1"><stop offset="0" stop-color="#a3afb6"/><stop offset="1" stop-color="#8f9ba3"/></linearGradient></defs><rect x="0" y="0" width="18" height="14" rx="2" fill="url(#g0)" shape-rendering="auto"/><rect x="2" y="3" width="2" height="2" fill="#fff"/><rect x="2" y="6" width="2" height="2" fill="#fff"/><rect x="5" y="3" width="2" height="2" fill="#fff"/><rect x="5" y="6" width="2" height="2" fill="#fff"/><rect x="8" y="3" width="2" height="2" fill="#fff"/><rect x="8" y="6" width="2" height="2" fill="#fff"/><rect x="11" y="3" width="2" height="2" fill="#fff"/><rect x="11" y="6" width="2" height="2" fill="#fff"/><rect x="14" y="3" width="2" height="2" fill="#fff"/><rect x="14" y="6" width="2" height="2" fill="#fff"/><rect x="5" y="10" width="8" height="2" fill="#fff"/></svg><div class="ft"></div><svg class="x" width="10" height="10"><defs><linearGradient id="xg0" gradientUnits="userSpaceOnUse" x1="0" y1="0" x2="0" y2="10"><stop offset="0" stop-color="#fbcaca"/><stop offset="1" stop-color="#f4aeae"/></linearGradient></defs><path d="M2 2 L8 8 M8 2 L2 8" stroke="url(#xg0)" stroke-width="3.4" stroke-linecap="round"/></svg></div>
<div class="ab" style="left:204px;top:569px;width:22px;height:22px"><svg width="22" height="22" viewBox="0 0 22 22" style="position:absolute;left:0;top:0;overflow:visible"><defs><linearGradient id="hdr" x1="0" y1="0" x2="0" y2="1"><stop offset="0" stop-color="#4aa3ee"/><stop offset="1" stop-color="#0b56c9"/></linearGradient></defs><path d="M3.5 2.5 H11.5 L14 5 V14.5 H3.5 Z" fill="#fff" stroke="#8e9aa0" stroke-width="1"/><rect x="6.8" y="7" width="12.2" height="9.4" rx="1.8" fill="#2f6fd6"/><path d="M8.6 16 V19.6 L11.8 16 Z" fill="#2f6fd6"/><g fill="#fff"><rect x="8.8" y="10.8" width="2" height="2"/><rect x="12" y="10.8" width="2" height="2"/><rect x="15.2" y="10.8" width="2" height="2"/></g></svg></div>
<div class="lbl" style="left:231px;top:573px">Trading journal</div>
<div class="fld" style="top:569px"><svg class="kb" width="18" height="14" shape-rendering="crispEdges"><defs><linearGradient id="g0" x1="0" y1="0" x2="0" y2="1"><stop offset="0" stop-color="#a3afb6"/><stop offset="1" stop-color="#8f9ba3"/></linearGradient></defs><rect x="0" y="0" width="18" height="14" rx="2" fill="url(#g0)" shape-rendering="auto"/><rect x="2" y="3" width="2" height="2" fill="#fff"/><rect x="2" y="6" width="2" height="2" fill="#fff"/><rect x="5" y="3" width="2" height="2" fill="#fff"/><rect x="5" y="6" width="2" height="2" fill="#fff"/><rect x="8" y="3" width="2" height="2" fill="#fff"/><rect x="8" y="6" width="2" height="2" fill="#fff"/><rect x="11" y="3" width="2" height="2" fill="#fff"/><rect x="11" y="6" width="2" height="2" fill="#fff"/><rect x="14" y="3" width="2" height="2" fill="#fff"/><rect x="14" y="6" width="2" height="2" fill="#fff"/><rect x="5" y="10" width="8" height="2" fill="#fff"/></svg><div class="ft"></div><svg class="x" width="10" height="10"><defs><linearGradient id="xg0" gradientUnits="userSpaceOnUse" x1="0" y1="0" x2="0" y2="10"><stop offset="0" stop-color="#fbcaca"/><stop offset="1" stop-color="#f4aeae"/></linearGradient></defs><path d="M2 2 L8 8 M8 2 L2 8" stroke="url(#xg0)" stroke-width="3.4" stroke-linecap="round"/></svg></div>
</body></html>
